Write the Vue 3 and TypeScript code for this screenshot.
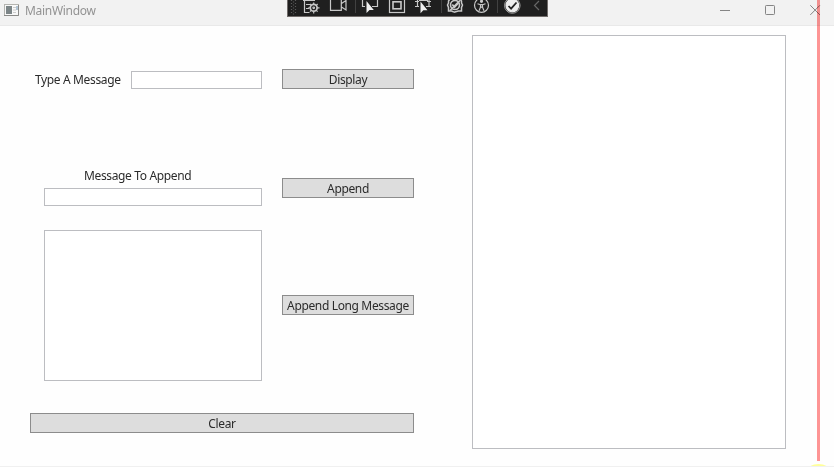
<script setup lang="ts">
import { ref } from 'vue'

const message = ref('')
const appendMessage = ref('')
const longMessage = ref('')
const output = ref('')

const display = () => { output.value = message.value }
const append = () => { output.value += appendMessage.value }
const appendLong = () => { output.value += longMessage.value }
const clear = () => { output.value = '' }
</script>

<template>
  <div class="window">
    <header class="titlebar">
      <svg class="app-icon" width="16" height="13" viewBox="0 0 16 13">
        <rect x=".5" y=".5" width="14" height="11" fill="#f8f8f8" stroke="#b4b4b0" />
        <path d="M0 11.5h14.5V1" fill="none" stroke="#8a8a88" />
        <rect x="2" y="2" width="6" height="8" fill="#7c8587" />
        <path d="M9 3.5h3M9 6h3M9 8.5h3" stroke="#ccc" />
        <path d="M13 2v4" stroke="#6b8fae" />
      </svg>
      <span class="title">MainWindow</span>
      <div class="controls">
        <svg width="12" height="12" viewBox="0 0 12 12"><path d="M1 6.5h10" /></svg>
        <svg width="12" height="12" viewBox="0 0 12 12"><rect x="1.5" y="1.5" width="9" height="9" rx=".8" /></svg>
        <svg width="12" height="12" viewBox="0 0 12 12"><path d="M1.3 1.3l9.6 9.6M10.9 1.3l-9.6 9.6" /></svg>
      </div>
    </header>

    <div class="debugbar">
      <svg width="12" height="16" viewBox="288 0 12 16">
        <path d="M291.5 0v15M295.5 0v15" stroke="#5a5a5a" stroke-dasharray="1 2" />
        <path d="M293.5 1.5v13" stroke="#5a5a5a" stroke-dasharray="1 2" />
      </svg>
      <svg width="24" height="16" viewBox="300 0 24 16">
        <path d="M304.5 0v12.5h5M303 .5h12M306 4.5h4M306 8.5h3" />
        <circle cx="313.7" cy="7.8" r="3.4" stroke-width="1.7" />
        <circle cx="313.7" cy="7.8" r=".8" />
        <path d="M313.7 2.5v2M313.7 11v2.5M308.3 7.8h2M317 7.8h2.5M310 4l1.2 1.2M316.3 10.3l1.3 1.3M310 11.6l1.2-1.2M316.3 5.3l1.3-1.3" />
      </svg>
      <svg width="31" height="16" viewBox="324 0 31 16">
        <path d="M330.5-2v12.3h10.8V-2M341.5 3.5l4.5-3v9.5l-4.5-3" />
      </svg>
      <i class="sep"></i>
      <svg width="27" height="16" viewBox="356 0 27 16">
        <path d="M365 6.5h-2.5V-1M372 6.5h5.5V-1" />
        <path class="solid" d="M366.5 1v12l3-3h4.3z" />
      </svg>
      <svg width="26" height="16" viewBox="383 0 26 16">
        <rect x="389.5" y="-2" width="15" height="14.5" />
        <rect x="393" y="1.8" width="8" height="7" stroke-width="1.6" />
      </svg>
      <svg width="32" height="16" viewBox="409 0 32 16">
        <path d="M415 1.5h4M427 1.5h4M415 6.5h4M426 6.5h5M417.5 0v7M429 0v7M419 .5h9" />
        <path class="solid" d="M420.5 1.5v11.7l2.8-3h4.2z" />
      </svg>
      <i class="sep"></i>
      <svg width="26" height="16" viewBox="442 0 26 16">
        <path d="M450-1l-1.5 2v2l-1 2 1 2.5V11h3.2l2.3 1.2M460-1l1.5 2v2l1 2-1 2.5V11h-3.2l-4.3 1.2" stroke-width="1.5" />
        <circle cx="455" cy="5" r="4.5" stroke-width="1.6" />
        <path d="M450 10.5l10-10M452.3 4.5l2.2 2.6 4-4.3" stroke-width="1.7" />
      </svg>
      <svg width="29" height="16" viewBox="468 0 29 16">
        <circle cx="481.5" cy="5.3" r="7" />
        <circle cx="481.5" cy="1.3" r="1" fill="#d0d0d0" />
        <path d="M477.5 3.7l3 1h2l3-1M480.5 4.8v2.4l-1.5 3.6M482.5 4.8v2.4l1.5 3.6M480.5 7.2h2" />
      </svg>
      <i class="sep"></i>
      <svg width="28" height="16" viewBox="498 0 28 16">
        <circle cx="512.3" cy="5.5" r="6.3" fill="#eee" stroke="#eee" />
        <circle cx="512.3" cy="5.5" r="7.8" stroke="#aaa" stroke-width=".9" />
        <path d="M508.5 6l2.6 2.7 5.4-6.2" stroke="#222" stroke-width="1.8" />
      </svg>
      <svg width="20" height="16" viewBox="526 0 20 16"><path d="M539 1l-4.5 4.5 4.5 4.5" stroke="#666" /></svg>
    </div>

    <main class="content">
      <section class="form">
        <div class="row display-row">
          <label for="msg">Type A Message</label>
          <input id="msg" v-model="message" class="box" type="text">
          <button @click="display">Display</button>
        </div>
        <div class="row append-row">
          <div class="stack">
            <label for="app">Message To Append</label>
            <input id="app" v-model="appendMessage" class="box" type="text">
          </div>
          <button @click="append">Append</button>
        </div>
        <div class="row long-row">
          <textarea v-model="longMessage" class="box"></textarea>
          <button class="long" @click="appendLong">Append Long Message</button>
        </div>
        <button class="clear" @click="clear">Clear</button>
      </section>
      <textarea v-model="output" class="box output" readonly></textarea>
    </main>
    <div class="edge-line"></div>
    <div class="marker"></div>
  </div>
</template>

<style>
body { background: #fff; overflow: hidden; }
</style>

<style scoped>
* { box-sizing: border-box; }
.window {
  position: relative;
  width: 834px;
  height: 467px;
  overflow: hidden;
  background: #fefefe;
  border-bottom: 1px solid #f0f0f0;
  font: 12px/16px "Noto Sans", "Open Sans", sans-serif;
  letter-spacing: -0.36px;
  color: #2b2b2b;
}
.titlebar {
  display: flex;
  height: 26px;
  padding: 4px 13px 0 4px;
  background: #f2f2f2;
  border-bottom: 1px solid #e9e9e9;
}
.title { margin: -1px 0 0 5px; color: #929292; letter-spacing: -0.3px; }
.controls { display: flex; gap: 33px; margin: 0 0 0 auto; }
.controls svg { fill: none; stroke: #858585; stroke-width: 1; }
.debugbar {
  position: absolute;
  top: 0;
  left: 287px;
  display: flex;
  width: 261px;
  height: 17px;
  background: #1f1f1f;
  border: 1px solid #706b69;
  border-top: 0;
}
.debugbar svg { flex: none; fill: none; stroke: #c8c8c8; stroke-width: 1.2; }
.debugbar .solid { fill: #eee; stroke: none; }
.sep { flex: none; width: 1px; height: 13px; background: #414141; }
.content { display: flex; gap: 58px; padding: 9px 0 0 30px; }
.form { width: 384px; padding-top: 34px; }
.row { display: flex; align-items: center; }
.box {
  display: block;
  margin: 0;
  padding: 1px 3px;
  border: 1px solid #bcbdc1;
  border-radius: 0;
  background: #fff;
  outline: 0;
  resize: none;
  font: inherit;
}
button {
  width: 132px;
  height: 20px;
  margin: 0 0 0 auto;
  padding: 2px 0 0;
  border: 1px solid #8c8c8c;
  border-radius: 0;
  background: #ddd;
  color: #2b2b2b;
  font: inherit;
  letter-spacing: inherit;
  white-space: nowrap;
}
.display-row { height: 20px; padding-left: 5px; }
.display-row label { width: 96px; padding-top: 2px; white-space: nowrap; }
.display-row .box { width: 131px; height: 18px; margin-top: 1px; }
.append-row { align-items: flex-end; height: 39px; margin-top: 78px; padding-left: 14px; }
.append-row button { margin-bottom: 8px; }
.stack { display: flex; flex-direction: column; width: 218px; gap: 4px; }
.stack label { margin-left: 40px; white-space: nowrap; }
.stack .box { width: 218px; height: 18px; }
.long-row { height: 151px; margin-top: 24px; padding-left: 14px; }
.long-row .box { width: 218px; height: 151px; }
.long-row button { position: relative; top: -1px; }
.clear { display: block; width: 384px; margin-top: 32px; }
.output { width: 314px; height: 414px; }
.edge-line {
  position: absolute;
  top: 0;
  left: 817px;
  width: 3px;
  height: 461px;
  background: #ff9696;
  mix-blend-mode: multiply;
}
.marker {
  position: absolute;
  top: 464px;
  left: 807px;
  width: 23px;
  height: 14px;
  border-radius: 50%;
  background: #ffff9a;
}
</style>
